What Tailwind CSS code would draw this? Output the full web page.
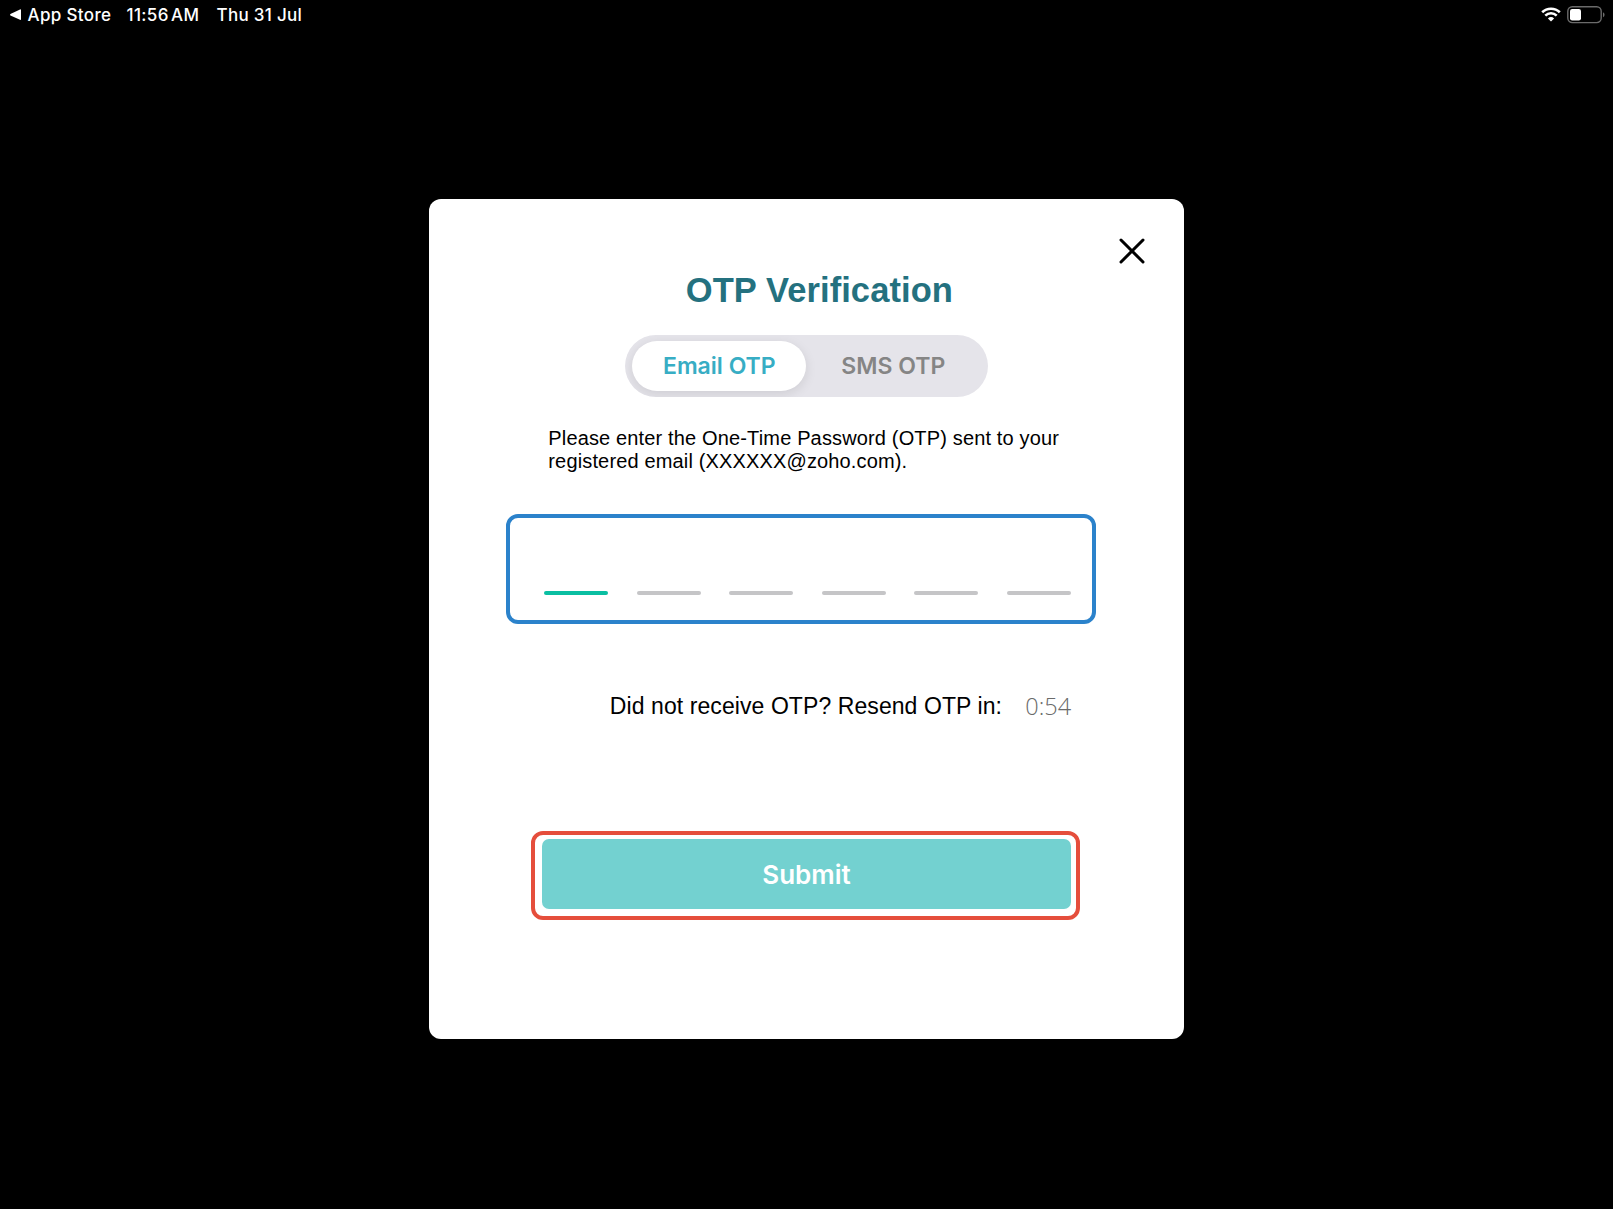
<!DOCTYPE html>
<html lang="en">
<head>
  <meta charset="UTF-8" />
  <meta name="viewport" content="width=device-width, initial-scale=1.0"/>
  <title>OTP Verification</title>
  <script src="https://cdn.jsdelivr.net/npm/@tailwindcss/browser@4"></script>
</head>
<body class="bg-black h-screen overflow-hidden font-['Liberation_Sans',Arial,sans-serif]">
  <!-- Status bar -->
  <header class="h-[29px] pl-[10px] pr-[8px] flex items-center justify-between text-white font-['Inter',sans-serif] text-[17px] leading-[29px] font-medium whitespace-nowrap">
    <div class="flex items-center">
      <svg class="w-[11px] h-[12px] mr-[6.5px]" viewBox="0 0 11 12" fill="currentColor"><path d="M0.4 5.1 10 .4Q11 0 11 1V10.2Q11 11.2 10 10.8L.4 6.4Q-.2 5.8 .4 5.1Z"/></svg>
      <span class="w-[99px] pt-px tracking-[0.35px]">App Store</span>
      <span class="w-[90px] pt-px tracking-[0.35px] [word-spacing:-2.5px]">11:56 AM</span>
      <span class="pt-px tracking-[0.3px]">Thu 31 Jul</span>
    </div>
    <div class="flex items-center gap-[6px]">
      <svg class="w-[20px] h-[15px]" viewBox="0 0 20 15" fill="none" stroke="currentColor">
        <path d="M1.2 5.3a12.6 12.6 0 0 1 17.6 0M4.3 8.6a8.2 8.2 0 0 1 11.4 0" stroke-width="2.6"/>
        <path d="M10 14.5 6.9 11.5a4.5 4.5 0 0 1 6.2 0Z" fill="currentColor" stroke="none"/>
      </svg>
      <svg class="w-[38px] h-[18px]" viewBox="0 0 38 18" fill="none">
        <rect x=".8" y=".8" width="33.4" height="15.8" rx="4.5" stroke="#6b6b6b" stroke-width="1.4"/>
        <rect x="3" y="3" width="11" height="11.4" rx="2.2" fill="#fff"/>
        <path d="M36 6.2q1.6.6 1.6 2.5T36 11.2Z" fill="#6b6b6b"/>
      </svg>
    </div>
  </header>

  <!-- Dialog -->
  <main class="relative w-[754.5px] h-[840.5px] mt-[169.5px] ml-[429.3px] bg-white rounded-[12px] flex flex-col text-black whitespace-nowrap">
    <button class="absolute top-[38px] right-[38.3px] size-[28px]" aria-label="Close">
      <svg class="size-[28px]" viewBox="0 0 28 28" fill="none" stroke="currentColor" stroke-width="3" stroke-linecap="round"><path d="M3 3 25 25M25 3 3 25"/></svg>
    </button>

    <h1 class="mt-[71px] ml-[256.5px] h-[40px] leading-[40px] text-[34.5px] tracking-[0.08px] font-bold text-[#24717f]">OTP Verification</h1>

    <div class="mt-[25.5px] ml-[196px] w-[363px] h-[62px] p-[6px] pl-[7px] rounded-full overflow-hidden bg-[#e5e4ea] flex font-['Inter',sans-serif] text-[23px] font-semibold">
      <button class="w-[174px] rounded-full bg-white text-[#37adc4] shadow-[0_3px_12px_rgba(0,0,0,0.1)]">Email OTP</button>
      <button class="flex-1 pr-[2px] text-[#858585]">SMS OTP</button>
    </div>

    <p class="mt-[30px] ml-[119px] text-[20px] tracking-[0.15px] leading-[23px]">Please enter the One-Time Password (OTP) sent to your<br>registered email (XXXXXX@zoho.com).</p>

    <div class="mt-[41px] ml-[76.7px] w-[590px] h-[110px] border-4 border-[#2b82cb] rounded-[12px] pl-[34px] pb-[25px] flex items-end gap-[28.6px]">
      <span class="w-[64px] h-[4px] rounded-full bg-[#0abfa2]"></span>
      <span class="w-[64px] h-[4px] rounded-full bg-[#c5c5c7]"></span>
      <span class="w-[64px] h-[4px] rounded-full bg-[#c5c5c7]"></span>
      <span class="w-[64px] h-[4px] rounded-full bg-[#c5c5c7]"></span>
      <span class="w-[64px] h-[4px] rounded-full bg-[#c5c5c7]"></span>
      <span class="w-[64px] h-[4px] rounded-full bg-[#c5c5c7]"></span>
    </div>

    <div class="mt-[67px] ml-[180.5px] h-[30px] leading-[30px] flex">
      <span class="w-[415.5px] text-[23px] tracking-[0.08px]">Did not receive OTP? Resend OTP in:</span>
      <span class="font-['Open_Sans',sans-serif] text-[23.5px] text-[#6a6a6a] font-light">0:54</span>
    </div>

    <div class="mt-[110px] ml-[101.7px] w-[549px] h-[89px] border-4 border-[#e54e3c] rounded-[12px] pt-[4px] pl-[7px]">
      <button class="w-[529px] h-[70px] rounded-[7px] bg-[#73d1d0] text-white font-['Inter',sans-serif] text-[26px] font-semibold">Submit</button>
    </div>
  </main>
</body>
</html>
